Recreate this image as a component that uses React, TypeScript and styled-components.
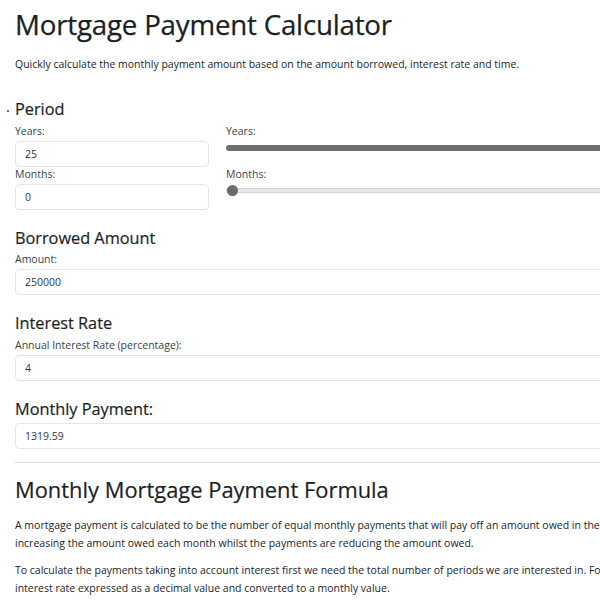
import React from "react";
import styled, { createGlobalStyle } from "styled-components";

const Global = createGlobalStyle`
  html, body { margin: 0; padding: 0; background: #fff; }
  body {
    font-family: "Open Sans", "Noto Sans", "Liberation Sans", sans-serif;
    color: #212529;
    overflow: hidden;
    width: 600px;
    height: 600px;
  }
  * { box-sizing: border-box; }
`;

const Page = styled.main`
  width: 680px;
  padding: 8px 0 0 15px;
`;

const Title = styled.h1`
  font-size: 27.7px;
  font-weight: 500;
  line-height: 1.2;
  margin: 0 0 14px;
  letter-spacing: -0.2px;
  color: #1b1f23;
  -webkit-text-stroke: 0.25px #1b1f23;
`;

const Lead = styled.p`
  font-size: 10.5px;
  line-height: 18px;
  margin: 0 0 27px;
`;

const Section = styled.section`
  margin-bottom: 19px;
`;

const SectionTitle = styled.h3<{ $dot?: boolean }>`
  position: relative;
  font-size: 16.3px;
  font-weight: 500;
  line-height: 1.2;
  margin: 0 0 4px;
  color: #1b1f23;
  -webkit-text-stroke: 0.2px #1b1f23;
  &::before {
    content: "";
    display: ${(p) => (p.$dot ? "block" : "none")};
    position: absolute;
    left: -8px;
    top: 10px;
    width: 1.5px;
    height: 1.5px;
    background: #555;
    border-radius: 50%;
  }
`;

const PeriodGrid = styled.div`
  display: grid;
  grid-template-columns: 194px 1fr;
  column-gap: 17px;
`;

const Label = styled.label`
  display: block;
  font-size: 10.5px;
  line-height: 14px;
  color: #3a3f44;
  margin-bottom: 3px;
`;

const Field = styled.div`
  height: 26px;
  border: 1px solid #e2e5e9;
  border-radius: 4px;
  padding: 0 9px;
  display: flex;
  align-items: center;
  font-size: 10.5px;
  color: #33383d;
  background: #fff;
`;

const RangeTrack = styled.div<{ $filled: boolean }>`
  position: relative;
  margin-top: 4px;
  height: ${(p) => (p.$filled ? "6px" : "5px")};
  border-radius: 3px;
  background: ${(p) => (p.$filled ? "#6f6f6f" : "#e6e6e6")};
  border: ${(p) => (p.$filled ? "none" : "1px solid #d4d4d4")};
  margin-bottom: 16px;
`;

const Thumb = styled.span`
  position: absolute;
  left: 0;
  top: 50%;
  width: 11px;
  height: 11px;
  margin-top: -5.5px;
  border-radius: 50%;
  background: #6a6a6a;
`;

const Divider = styled.hr`
  border: 0;
  border-top: 1px solid #dcdcdc;
  margin: -6px 0 14px;
`;

const H2 = styled.h2`
  font-size: 21.9px;
  font-weight: 500;
  line-height: 1.2;
  margin: 0 0 12px;
  color: #1b1f23;
  -webkit-text-stroke: 0.2px #1b1f23;
`;

const Para = styled.p`
  font-size: 10.5px;
  line-height: 18px;
  margin: 0 0 9px;
  white-space: nowrap;
`;

const FieldBlock = styled.div`
  display: flex;
  flex-direction: column;
`;

export default function App() {
  return (
    <>
      <Global />
      <Page>
        <Title>Mortgage Payment Calculator</Title>
        <Lead>
          Quickly calculate the monthly payment amount based on the amount borrowed, interest rate and time.
        </Lead>

        <Section>
          <SectionTitle $dot>Period</SectionTitle>
          <PeriodGrid>
            <FieldBlock>
              <Label>Years:</Label>
              <Field>25</Field>
            </FieldBlock>
            <FieldBlock>
              <Label>Years:</Label>
              <RangeTrack $filled />
            </FieldBlock>
            <FieldBlock>
              <Label>Months:</Label>
              <Field>0</Field>
            </FieldBlock>
            <FieldBlock>
              <Label>Months:</Label>
              <RangeTrack $filled={false}>
                <Thumb />
              </RangeTrack>
            </FieldBlock>
          </PeriodGrid>
        </Section>

        <Section>
          <SectionTitle>Borrowed Amount</SectionTitle>
          <Label>Amount:</Label>
          <Field>250000</Field>
        </Section>

        <Section>
          <SectionTitle>Interest Rate</SectionTitle>
          <Label>Annual Interest Rate (percentage):</Label>
          <Field>4</Field>
        </Section>

        <Section>
          <SectionTitle>Monthly Payment:</SectionTitle>
          <Field>1319.59</Field>
        </Section>

        <Divider />

        <H2>Monthly Mortgage Payment Formula</H2>
        <Para>
          A mortgage payment is calculated to be the number of equal monthly payments that will pay off an amount owed in the given time period, with interest
          <br />
          increasing the amount owed each month whilst the payments are reducing the amount owed.
        </Para>
        <Para>
          To calculate the payments taking into account interest first we need the total number of periods we are interested in. For this we also need the
          <br />
          interest rate expressed as a decimal value and converted to a monthly value.
        </Para>
      </Page>
    </>
  );
}
